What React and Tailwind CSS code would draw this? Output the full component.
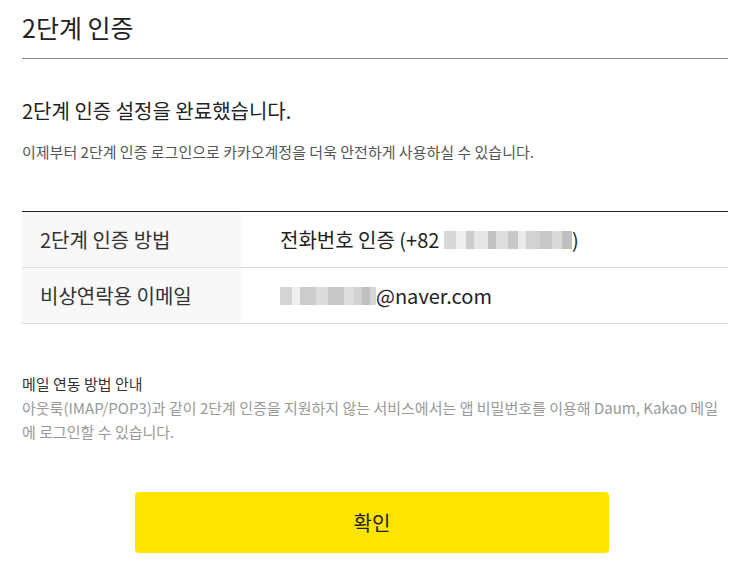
const Blur = ({ blocks }) => (
  <span className="inline-flex items-center align-middle h-[20px]">
    {blocks.map((b, i) => (
      <span key={i} className="inline-block h-[18px]" style={{ width: b[0], background: b[1] }} />
    ))}
  </span>
);

const phone = [
  [12, '#d8d8d8'], [10, '#eeeeee'], [8, '#cccccc'], [14, '#e6e6e6'], [8, '#c2c2c2'],
  [12, '#dddddd'], [10, '#c8c8c8'], [8, '#ebebeb'], [14, '#d2d2d2'], [12, '#c9c9c9'], [10, '#dadada'], [10, '#c0c0c0'],
];

const email = [
  [12, '#d4d4d4'], [8, '#f0f0f0'], [16, '#cdcdcd'], [12, '#dcdcdc'], [16, '#c9c9c9'],
  [10, '#dedede'], [8, '#d1d1d1'], [8, '#c0c0c0'], [6, '#d6d6d6'],
];

export default function App() {
  return (
    <div className="w-[750px] h-[573px] bg-white overflow-hidden px-[22px] text-[#222]"
      style={{ fontFamily: '"Noto Sans CJK KR", "Noto Sans", sans-serif' }}>
      <h1 className="text-[25px] leading-[30px] pt-[12px] pb-[16px] border-b border-[#888] font-normal">
        2단계 인증
      </h1>

      <h2 className="mt-[39px] text-[20px] leading-[26px] font-normal">2단계 인증 설정을 완료했습니다.</h2>
      <p className="mt-[18px] text-[15px] leading-[20px] text-[#555]">
        이제부터 2단계 인증 로그인으로 카카오계정을 더욱 안전하게 사용하실 수 있습니다.
      </p>

      <div className="mt-[49px] border-t border-[#222]">
        <div className="flex h-[56px] border-b border-[#ddd]">
          <div className="w-[219px] bg-[#f8f8f8] flex items-center pl-[18px] text-[20px] text-[#333]">2단계 인증 방법</div>
          <div className="flex items-center pl-[39px] text-[20px]">
            전화번호 인증 (+82&nbsp;<Blur blocks={phone} />)
          </div>
        </div>
        <div className="flex h-[56px] border-b border-[#ddd]">
          <div className="w-[219px] bg-[#f8f8f8] flex items-center pl-[18px] text-[20px] text-[#333]">비상연락용 이메일</div>
          <div className="flex items-center pl-[39px] text-[20px]">
            <Blur blocks={email} />@naver.com
          </div>
        </div>
      </div>

      <div className="mt-[48px] text-[15px] leading-[24px]">
        <p className="text-[#333]">메일 연동 방법 안내</p>
        <p className="text-[#999]">
          아웃룩(IMAP/POP3)과 같이 2단계 인증을 지원하지 않는 서비스에서는 앱 비밀번호를 이용해 Daum, Kakao 메일에 로그인할 수 있습니다.
        </p>
      </div>

      <div className="flex mt-[48px] pl-[113px]">
        <button className="w-[474px] h-[61px] bg-[#fee500] rounded-[4px] text-[20px] text-[#222]">확인</button>
      </div>
    </div>
  );
}
